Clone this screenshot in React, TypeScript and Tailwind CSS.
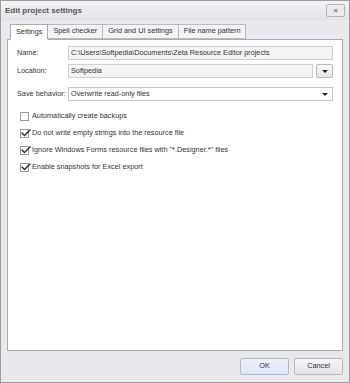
import { Check } from 'lucide-react';

const font = { fontFamily: '"Liberation Sans", Arial, sans-serif' };

function Tab({ label, active }: { label: string; active?: boolean }) {
  return (
    <div
      className={
        active
          ? 'h-[16px] -mb-px px-[5px] border border-[#a9abb3] border-b-white bg-white flex items-center z-10'
          : 'h-[15px] mt-[1px] px-[5px] border border-[#b9bbc3] bg-[#f3f3f5] flex items-center -ml-px'
      }
    >
      {label}
    </div>
  );
}

function Box({ checked, label }: { checked?: boolean; label: string }) {
  return (
    <div className="flex items-center gap-[3px] h-[17px] whitespace-nowrap">
      <div className="w-[9px] h-[9px] border border-[#9a9aa0] bg-white relative">
        {checked && (
          <Check
            size={12}
            strokeWidth={3}
            className="absolute -left-[1px] -top-[3px] text-[#333]"
          />
        )}
      </div>
      <span>{label}</span>
    </div>
  );
}

export default function App() {
  return (
    <div
      style={font}
      className="w-[350px] h-[383px] bg-[#e9e9ed] border border-[#9c9ca4] flex flex-col text-[7.3px] text-[#333]"
    >
      <div className="h-[19px] flex items-center justify-between pl-[4px] pr-[4px] bg-gradient-to-b from-[#f2f2f4] to-[#e4e4e8]">
        <span className="text-[8px] font-bold text-[#555]">Edit project settings</span>
        <div className="w-[19px] h-[13px] border border-[#b4b4bc] rounded-[2px] bg-[#ececf0] flex items-center justify-center text-[8px] text-[#777] font-bold">
          ×
        </div>
      </div>

      <div className="flex-1 flex flex-col px-[6px] pt-[3px]">
        <div className="flex items-end pl-[3px] whitespace-nowrap">
          <Tab label="Settings" active />
          <Tab label="Spell checker" />
          <Tab label="Grid and UI settings" />
          <Tab label="File name pattern" />
        </div>

        <div className="h-[312px] bg-white border border-[#a9abb3] pl-[9px] pr-[9px] pt-[5px]">
          <div className="flex items-center h-[16px]">
            <span className="w-[51px] shrink-0 whitespace-nowrap">Name:</span>
            <div className="flex-1 h-[14px] border border-[#cfcfd3] bg-[#f4f4f5] flex items-center px-[2px] whitespace-nowrap">
              C:\Users\Softpedia\Documents\Zeta Resource Editor projects
            </div>
          </div>
          <div className="flex items-center h-[16px] mt-[2px]">
            <span className="w-[51px] shrink-0 whitespace-nowrap">Location:</span>
            <div className="flex-1 h-[14px] border border-[#cfcfd3] bg-[#f4f4f5] flex items-center px-[2px]">
              Softpedia
            </div>
            <div className="ml-[3px] w-[17px] h-[14px] border border-[#b9b9c0] rounded-[2px] bg-gradient-to-b from-[#f8f8fa] to-[#e6e6ea] flex items-center justify-center">
              <div className="w-0 h-0 border-l-[3px] border-r-[3px] border-t-[3px] border-l-transparent border-r-transparent border-t-[#222]" />
            </div>
          </div>
          <div className="flex items-center h-[16px] mt-[7px]">
            <span className="w-[51px] shrink-0 whitespace-nowrap">Save behavior:</span>
            <div className="flex-1 h-[14px] border border-[#c7c7cc] bg-white flex items-center justify-between px-[2px]">
              <span>Overwrite read-only files</span>
              <div className="mr-[2px] w-0 h-0 border-l-[3px] border-r-[3px] border-t-[3px] border-l-transparent border-r-transparent border-t-[#222]" />
            </div>
          </div>

          <div className="mt-[6px] pl-[3px] flex flex-col">
            <Box label="Automatically create backups" />
            <Box checked label="Do not write empty strings into the resource file" />
            <Box checked label={'Ignore Windows Forms resource files with "*.Designer.*" files'} />
            <Box checked label="Enable snapshots for Excel export" />
          </div>
        </div>

        <div className="flex justify-end gap-[5px] mt-[7px]">
          <button className="w-[49px] h-[17px] border border-[#b4b6c4] rounded-[2px] bg-gradient-to-b from-[#eef0fc] to-[#dfe3f7]">
            OK
          </button>
          <button className="w-[49px] h-[17px] border border-[#b8b8be] rounded-[2px] bg-gradient-to-b from-[#f6f6f8] to-[#e4e4e8]">
            Cancel
          </button>
        </div>
      </div>
    </div>
  );
}
